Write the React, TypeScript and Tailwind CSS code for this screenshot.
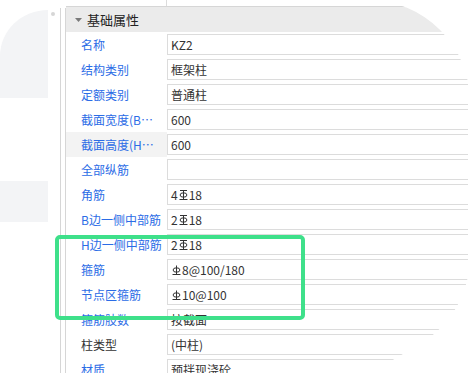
import React from "react";

type Grade = "B" | "C";

function Rebar({ grade }: { grade: Grade }) {
  // steel grade mark (circle with stem, bars per grade)
  return (
    <svg width="9" height="10" viewBox="0 0 9 10" className="inline-block align-[4px] mx-[1px]">
      <g stroke="#333" strokeWidth="1" fill="none">
        <ellipse cx="4.5" cy="5" rx="3.4" ry="2.2" />
        <line x1="4.5" y1="0.5" x2="4.5" y2="9" />
        {grade === "C" && <line x1="1" y1="0.5" x2="8" y2="0.5" />}
        <line x1="0.5" y1="9.5" x2="8.5" y2="9.5" />
      </g>
    </svg>
  );
}

type Row = {
  label: string;
  value?: React.ReactNode;
  dark?: boolean;
  shaded?: boolean;
};

const rows: Row[] = [
  { label: "名称", value: "KZ2" },
  { label: "结构类别", value: "框架柱" },
  { label: "定额类别", value: "普通柱" },
  { label: "截面宽度(B边)(mm)", value: "600" },
  { label: "截面高度(H边)(mm)", value: "600", shaded: true },
  { label: "全部纵筋", value: "" },
  { label: "角筋", value: <>4<Rebar grade="C" />18</> },
  { label: "B边一侧中部筋", value: <>2<Rebar grade="C" />18</> },
  { label: "H边一侧中部筋", value: <>2<Rebar grade="C" />18</> },
  { label: "箍筋", value: <><Rebar grade="B" />8@100/180</> },
  { label: "节点区箍筋", value: <><Rebar grade="B" />10@100</> },
  { label: "箍筋肢数", value: "按截面" },
  { label: "柱类型", value: "(中柱)", dark: true },
  { label: "材质", value: "预拌现浇砼" },
];

export default function App() {
  return (
    <div className="relative w-[468px] h-[373px] overflow-hidden bg-white flex font-['Noto_Sans_CJK_SC','Noto_Sans',sans-serif] text-[12px] text-[#333]">
      {/* left strip */}
      <div className="w-[48px] shrink-0 flex flex-col">
        <div className="mt-[10px] h-[88px] shrink-0 bg-[#f3f4f6] rounded-tl-[48px_46px]" />
        <div className="mt-[83px] h-[41px] shrink-0 bg-[#f3f4f6]" />
      </div>
      <div className="w-[12px] shrink-0 flex justify-end pt-[12px]">
        <div className="w-[4px] h-[4px] rounded-full bg-[#d6d6d6] mr-[5px]" />
      </div>
      <div className="w-[6px] shrink-0 mt-[8px] border-l border-r border-[#d6d6d6]" />

      {/* property grid */}
      <div className="w-[404px] shrink-0 flex flex-col [clip-path:path('M0_0L302_0A102_102_0_0_1_404_102L404_256A102_102_0_0_1_354_344L250_405L0_405Z')]">
        <div className="h-[6px] shrink-0 flex">
          <div className="w-[101px] border-r border-[#dcdcdc]" />
        </div>
        <div className="h-[26px] shrink-0 border-t border-[#d6d6d6] bg-[#ebebeb] flex items-center">
          <svg width="7" height="4" viewBox="0 0 7 4" className="ml-[9px] mr-[5px]">
            <path d="M0 0H7L3.5 4Z" fill="#7a7a7a" />
          </svg>
          <span className="text-[13px] text-[#222]">基础属性</span>
        </div>
        {rows.map((r) => (
          <div key={r.label} className="h-[25px] shrink-0 flex items-center">
            <div
              className={
                "w-[101px] h-full shrink-0 flex items-center pl-[15px] pr-[5px] " +
                (r.shaded ? "bg-[#f3f3f3]" : "")
              }
            >
              <span className={"truncate " + (r.dark ? "text-[#333]" : "text-[#2b6ce6]")}>{r.label}</span>
            </div>
            <div className="flex-1 h-[21px] border border-[#dcdcdc] flex items-center pl-[3px] whitespace-nowrap">
              {r.value}
            </div>
          </div>
        ))}
      </div>

      {/* highlight frame */}
      <div className="absolute left-[55px] top-[235px] w-[250px] h-[85px] border-[4px] border-[#3ee08a] rounded-[5px]" />
    </div>
  );
}
